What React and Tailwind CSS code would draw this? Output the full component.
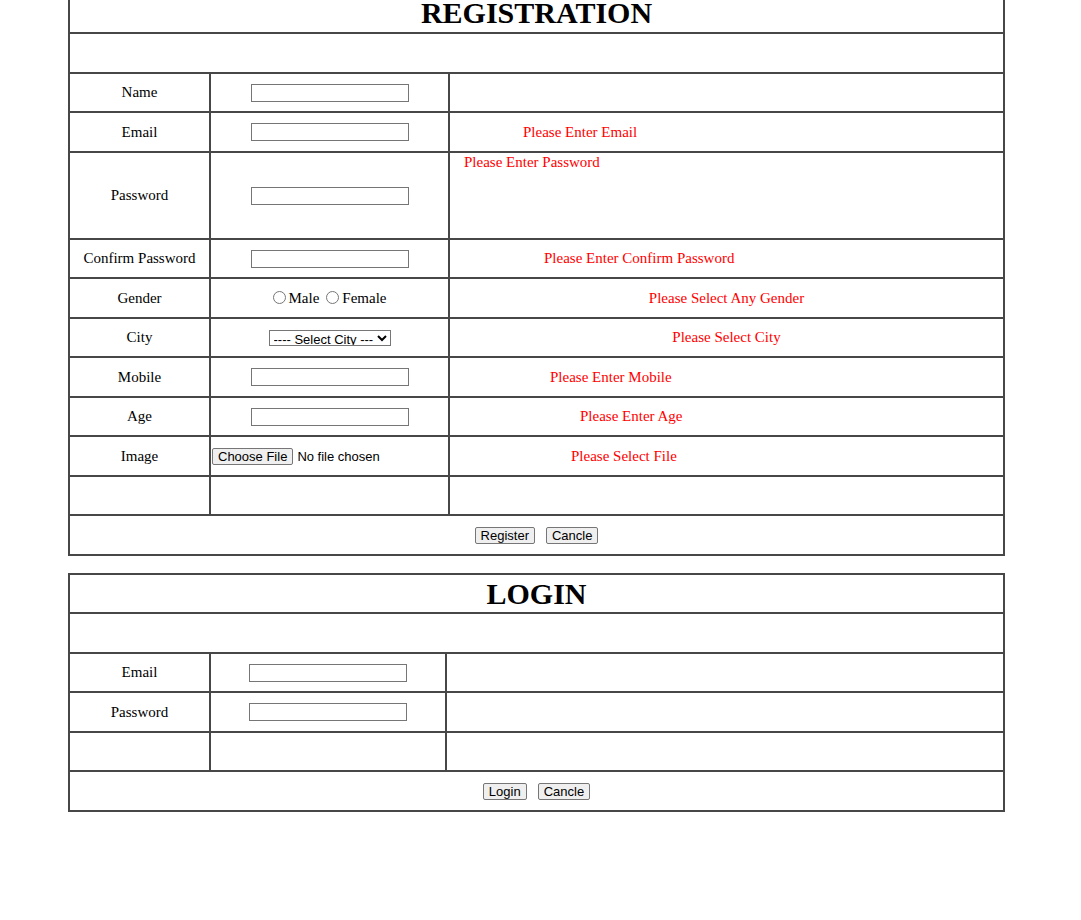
import React from 'react'

const cell = 'border-2 border-[#474747] p-[1px]'
const label = `${cell} w-[141px] text-center`
const field = `${cell} text-center`
const msg = `${cell} text-left text-[#ff0000]`
const heading = `${cell} text-center text-[30px] leading-[32px] font-bold`

const textInput =
  'w-[158px] h-[18px] border border-[#767676] bg-white align-middle text-[13px] font-["Liberation_Sans",Arial,sans-serif]'
const btn =
  'h-[17px] px-[5px] bg-[#efefef] border border-[#767676] rounded-[2px] text-[13px] leading-[15px] font-["Liberation_Sans",Arial,sans-serif] text-black align-middle'

function Registration() {
  return (
    <table className="ml-[68px] mt-[-8px] w-[937px] border-collapse border-2 border-[#474747]">
      <tbody>
        <tr className="h-[40px]">
          <td colSpan={3} className={heading}>
            REGISTRATION
          </td>
        </tr>
        <tr className="h-[40px]">
          <td colSpan={3} className={cell}></td>
        </tr>
        <tr className="h-[39px]">
          <td className={label}>Name</td>
          <td className={`${field} w-[239px]`}>
            <input type="text" className={textInput} />
          </td>
          <td className={msg}></td>
        </tr>
        <tr className="h-[40px]">
          <td className={label}>Email</td>
          <td className={field}>
            <input type="text" className={textInput} />
          </td>
          <td className={`${msg} pl-[73px]`}>Please Enter Email</td>
        </tr>
        <tr className="h-[87px]">
          <td className={label}>Password</td>
          <td className={field}>
            <input type="password" className={textInput} />
          </td>
          <td className={`${msg} pl-[14px] align-top`}>Please Enter Password</td>
        </tr>
        <tr className="h-[39px]">
          <td className={label}>Confirm Password</td>
          <td className={field}>
            <input type="password" className={textInput} />
          </td>
          <td className={`${msg} pl-[94px]`}>Please Enter Confirm Password</td>
        </tr>
        <tr className="h-[40px]">
          <td className={label}>Gender</td>
          <td className={field}>
            <input type="radio" name="gender" className="align-[-1px] mr-[3px]" />
            Male
            <input type="radio" name="gender" className="align-[-1px] ml-[7px] mr-[3px]" />
            Female
          </td>
          <td className={`${cell} text-center text-[#ff0000]`}>Please Select Any Gender</td>
        </tr>
        <tr className="h-[39px]">
          <td className={label}>City</td>
          <td className={field}>
            <select className="h-[16px] w-[122px] border border-[#767676] bg-white text-[13px] leading-[14px] font-['Liberation_Sans',Arial,sans-serif] align-middle">
              <option>---- Select City ---</option>
            </select>
          </td>
          <td className={`${cell} text-center text-[#ff0000]`}>Please Select City</td>
        </tr>
        <tr className="h-[40px]">
          <td className={label}>Mobile</td>
          <td className={field}>
            <input type="text" className={textInput} />
          </td>
          <td className={`${msg} pl-[100px]`}>Please Enter Mobile</td>
        </tr>
        <tr className="h-[39px]">
          <td className={label}>Age</td>
          <td className={field}>
            <input type="text" className={textInput} />
          </td>
          <td className={`${msg} pl-[130px]`}>Please Enter Age</td>
        </tr>
        <tr className="h-[40px]">
          <td className={label}>Image</td>
          <td className={`${cell} text-left p-0`}>
            <div className="flex items-center gap-[4px] font-['Liberation_Sans',Arial,sans-serif] text-[13px]">
              <span className="h-[17px] px-[5px] bg-[#efefef] border border-[#767676] rounded-[2px] leading-[15px]">
                Choose File
              </span>
              <span>No file chosen</span>
            </div>
          </td>
          <td className={`${msg} pl-[121px]`}>Please Select File</td>
        </tr>
        <tr className="h-[39px]">
          <td className={label}></td>
          <td className={field}></td>
          <td className={msg}></td>
        </tr>
        <tr className="h-[40px]">
          <td colSpan={3} className={`${cell} text-center`}>
            <button className={`${btn} mr-[11px]`}>Register</button>
            <button className={btn}>Cancle</button>
          </td>
        </tr>
      </tbody>
    </table>
  )
}

function Login() {
  return (
    <table className="ml-[68px] mt-[17px] w-[937px] border-collapse border-2 border-[#474747]">
      <tbody>
        <tr className="h-[39px]">
          <td colSpan={3} className={heading}>
            LOGIN
          </td>
        </tr>
        <tr className="h-[40px]">
          <td colSpan={3} className={cell}></td>
        </tr>
        <tr className="h-[39px]">
          <td className={label}>Email</td>
          <td className={`${field} w-[236px]`}>
            <input type="text" className={textInput} />
          </td>
          <td className={cell}></td>
        </tr>
        <tr className="h-[40px]">
          <td className={label}>Password</td>
          <td className={field}>
            <input type="password" className={textInput} />
          </td>
          <td className={cell}></td>
        </tr>
        <tr className="h-[39px]">
          <td className={label}></td>
          <td className={field}></td>
          <td className={cell}></td>
        </tr>
        <tr className="h-[40px]">
          <td colSpan={3} className={`${cell} text-center`}>
            <button className={`${btn} mr-[11px]`}>Login</button>
            <button className={btn}>Cancle</button>
          </td>
        </tr>
      </tbody>
    </table>
  )
}

export default function App() {
  return (
    <div className="min-h-[920px] bg-white text-black text-[15px] leading-[17px] font-['Liberation_Serif','Times_New_Roman',serif] overflow-hidden">
      <Registration />
      <Login />
    </div>
  )
}
